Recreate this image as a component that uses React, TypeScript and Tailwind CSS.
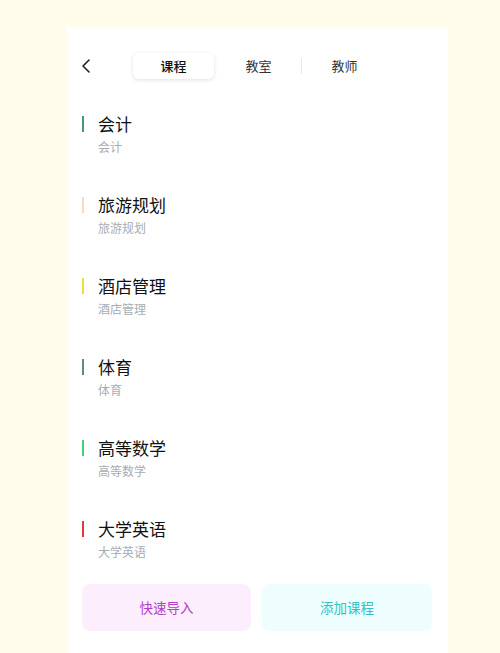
import { ChevronLeft } from "lucide-react";

const courses = [
  { name: "会计", color: "bg-[#3f9b7b]" },
  { name: "旅游规划", color: "bg-[#f6dcc0]" },
  { name: "酒店管理", color: "bg-[#f0dc3c]" },
  { name: "体育", color: "bg-[#5a8f7a]" },
  { name: "高等数学", color: "bg-[#3ed07a]" },
  { name: "大学英语", color: "bg-[#e03a3a]" },
];

export default function App() {
  return (
    <div
      className="h-[653px] w-[500px] bg-[#fffcec] pt-[27px] pl-[67px]"
      style={{ fontFamily: '"Noto Sans CJK SC", "Noto Sans", sans-serif' }}
    >
      <div className="h-[626px] w-[381px] bg-white pl-[15px] pr-[16px]">
        {/* header */}
        <div className="flex h-[76px] items-center pt-[1px]">
          <ChevronLeft className="-ml-[8px] h-[24px] w-[24px] text-[#222]" strokeWidth={1.6} />
          <div className="ml-[33px] flex items-center">
            <div className="flex w-[85px] justify-center">
              <div className="flex h-[26px] w-[81px] items-center justify-center rounded-md bg-white text-[13px] font-medium text-[#111] shadow-[0_1px_4px_rgba(0,0,0,0.12)]">
                课程
              </div>
            </div>
            <div className="flex w-[85px] justify-center text-[13px] text-[#333]">教室</div>
            <div className="h-[16px] w-px bg-[#e8e8e8]" />
            <div className="flex w-[85px] justify-center text-[13px] text-[#333]">教师</div>
          </div>
        </div>

        {/* list */}
        <div className="mt-[9px] flex flex-col gap-[37px]">
          {courses.map((c) => (
            <div key={c.name} className="flex flex-col">
              <div className="flex items-center">
                <div className={`h-[16px] w-[2px] ${c.color}`} />
                <div className="ml-[14px] text-[17px] leading-[24px] text-[#111]">{c.name}</div>
              </div>
              <div className="ml-[16px] mt-[2px] text-[12px] leading-[18px] text-[#a7adb3]">{c.name}</div>
            </div>
          ))}
        </div>

        {/* actions */}
        <div className="mt-[23px] flex gap-[11px]">
          <button className="flex h-[47px] w-[169px] items-center justify-center rounded-lg bg-[#fdeefd] text-[13.5px] text-[#b23fc8]">
            快速导入
          </button>
          <button className="flex h-[47px] w-[170px] items-center justify-center rounded-lg bg-[#eefdfd] text-[13.5px] text-[#2ec4c4]">
            添加课程
          </button>
        </div>
      </div>
    </div>
  );
}
